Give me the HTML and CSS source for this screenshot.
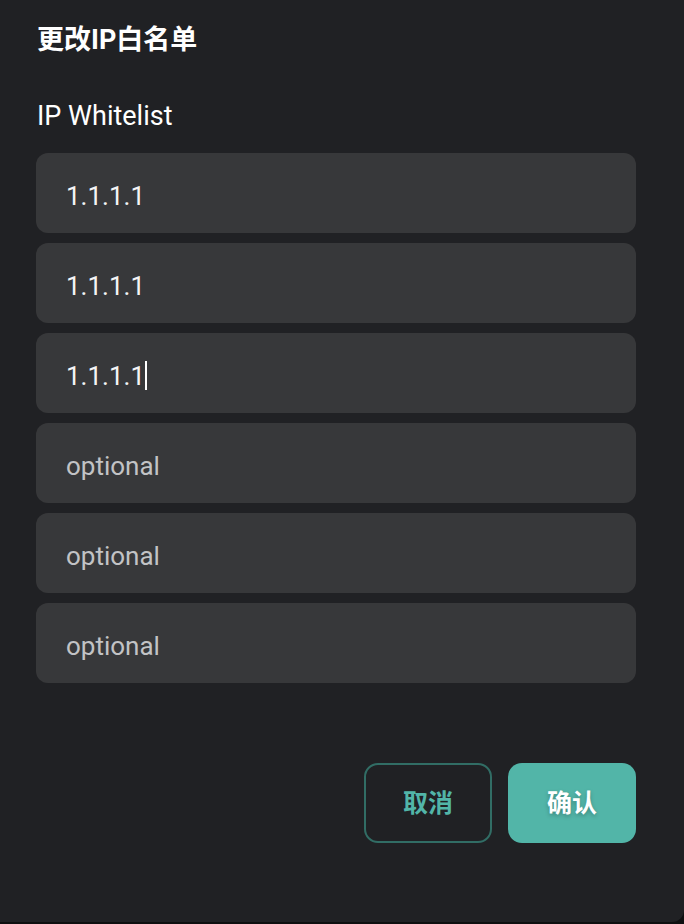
FILE: index.html
```html
<!DOCTYPE html>
<html>
<head>
    <title>更改IP白名单</title>
    <link rel="stylesheet" href="styles.css">
</head>
<body>
    <div class="dialog">
        <h2 class="title">更改IP白名单</h2>
        <div class="label">IP Whitelist</div>
        <div class="fields">
            <div class="field">1.1.1.1</div>
            <div class="field">1.1.1.1</div>
            <div class="field">1.1.1.1<span class="caret"></span></div>
            <div class="field empty">optional</div>
            <div class="field empty">optional</div>
            <div class="field empty">optional</div>
        </div>
        <div class="actions">
            <button class="btn btn-cancel">取消</button>
            <button class="btn btn-ok">确认</button>
        </div>
    </div>
</body>
</html>
```

FILE: styles.css
```css
html, body {
    margin: 0;
    padding: 0;
    background: #0e0f10;
}
body {
    font-family: Roboto, "Noto Sans CJK SC", sans-serif;
    color: #fff;
}
.dialog {
    width: 684px;
    height: 922px;
    box-sizing: border-box;
    padding: 20px 48px 0 36px;
    background: #202124;
    border-radius: 0 0 12px 0;
}
.title {
    margin: 0;
    font-size: 27px;
    font-weight: 700;
    line-height: 40px;
    padding-left: 1px;
}
.label {
    margin-top: 37px;
    font-size: 27px;
    line-height: 38px;
    padding-left: 1px;
}
.fields {
    margin-top: 18px;
    display: flex;
    flex-direction: column;
    gap: 10px;
}
.field {
    height: 80px;
    box-sizing: border-box;
    display: flex;
    align-items: center;
    padding: 5px 30px 0;
    background: #37383a;
    border-radius: 12px;
    font-size: 26px;
    color: #f4f4f4;
}
.field.empty {
    color: #c2c3c5;
}
.caret {
    display: inline-block;
    width: 2px;
    height: 29px;
    margin-left: 0;
    background: #fff;
}
.actions {
    margin-top: 80px;
    display: flex;
    justify-content: flex-end;
    gap: 16px;
}
.btn {
    width: 128px;
    height: 80px;
    padding: 0 0 4px;
    border-radius: 14px;
    font-family: Roboto, "Noto Sans CJK SC", sans-serif;
    font-size: 25px;
    font-weight: 700;
    cursor: pointer;
}
.btn-cancel {
    background: transparent;
    border: 2px solid #316d65;
    color: #52b5a8;
}
.btn-ok {
    background: #52b5a8;
    border: none;
    color: #fff;
    text-shadow: 0 2px 4px rgba(0,0,0,0.25);
}
```
